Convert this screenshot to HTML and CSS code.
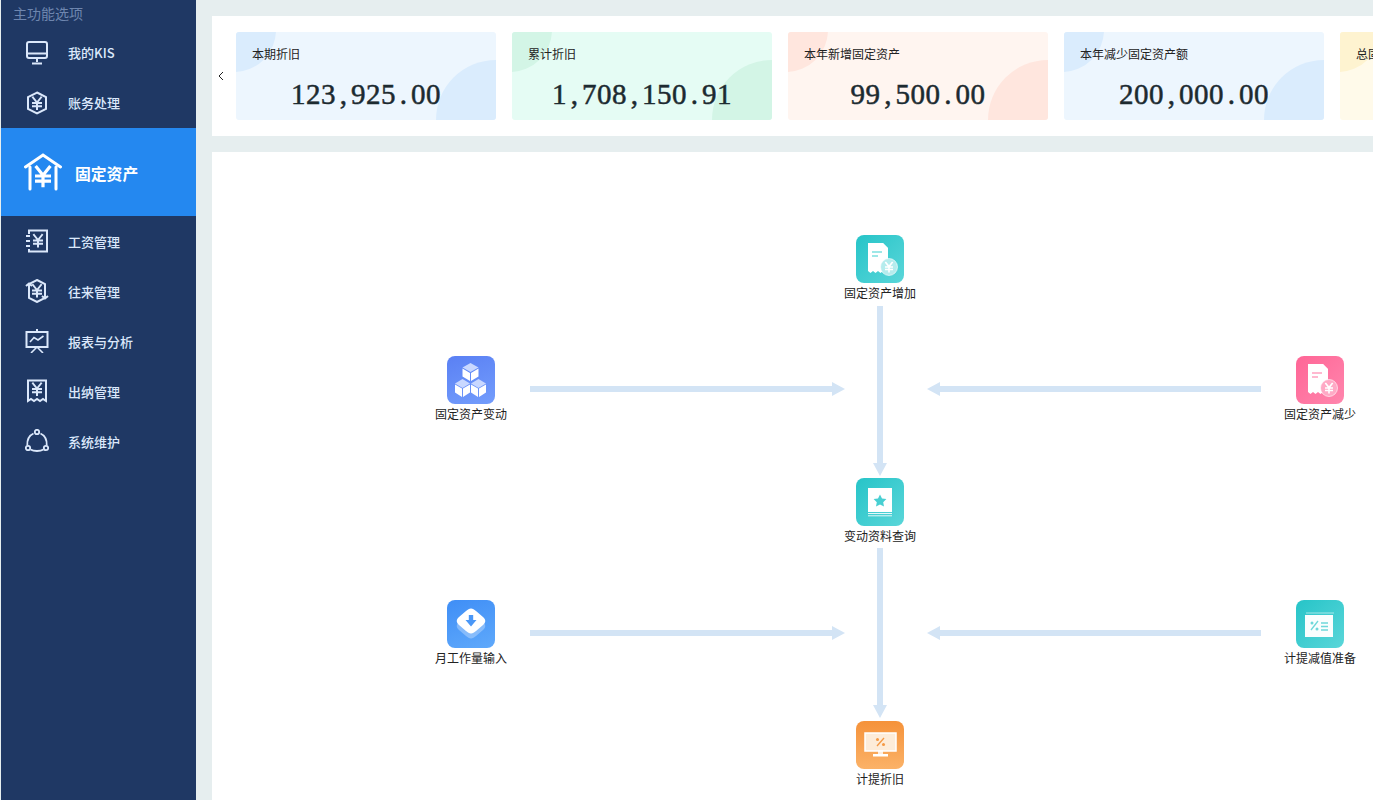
FILE: index.html
```html
<!DOCTYPE html>
<html lang="zh-CN">
<head>
<meta charset="utf-8">
<title>固定资产</title>
<link rel="stylesheet" href="styles.css">
</head>
<body>
<svg class="defs" width="0" height="0" aria-hidden="true">
  <defs>
    <g id="yen" fill="none" stroke="currentColor" stroke-width="2" stroke-linecap="square">
      <path d="M-4 -5.500L0 -0.500L4 -5.500M-4 0H4M-4 3.200H4M0 -0.500V6"/>
    </g>
    <g id="docu">
      <path d="M12 8H27L32 13V36L29.500 38L27 36L24.500 38L22 36L19.500 38L17 36L14.500 38L12 36Z" fill="#fff"/>
      <path d="M27 8V13H32Z" fill="#fff" opacity=".65"/>
      <path d="M16 17H26M16 21H22" fill="none" stroke="var(--accent)" stroke-width="1.600"/>
      <circle cx="33" cy="32" r="8.500" fill="var(--coin)" stroke="#fff" stroke-opacity=".6" stroke-width="1"/>
    </g>
  </defs>
</svg>
<div class="app">
  <aside class="sidebar">
    <h2 class="side-title">主功能选项</h2>
    <nav class="side-nav">
      <a class="side-item">
        <svg class="side-icon" viewBox="0 0 24 24" fill="none" stroke="currentColor" stroke-width="2"><rect x="2" y="1" width="20" height="16" rx="2"/><path d="M2 12.500H22M12 17V21M7 22.500H17"/></svg>
        <span>我的KIS</span>
      </a>
      <a class="side-item">
        <svg class="side-icon" viewBox="0 0 24 24" fill="none" stroke="currentColor" stroke-width="2"><path d="M12 1.500L21 6V18L12 22.500L3 18V6Z"/><use href="#yen" transform="translate(12 12)"/></svg>
        <span>账务处理</span>
      </a>
      <a class="side-item active">
        <svg class="side-icon big" viewBox="0 0 38 38" fill="none" stroke="currentColor" stroke-width="3" stroke-linecap="round"><path d="M1.500 14L19 2L36.500 14"/><path d="M6 14V36M32 14V36"/><g transform="translate(19 23) scale(1.600)"><use href="#yen"/></g></svg>
        <span>固定资产</span>
      </a>
      <a class="side-item">
        <svg class="side-icon" viewBox="0 0 24 24" fill="none" stroke="currentColor" stroke-width="2"><path d="M4 5V1.500H22V22.500H4V20"/><path d="M1 7H5M1 12H5M1 17H5"/><use href="#yen" transform="translate(13 11.500)"/></svg>
        <span>工资管理</span>
      </a>
      <a class="side-item">
        <svg class="side-icon" viewBox="0 0 24 24" fill="none" stroke="currentColor" stroke-width="2"><path d="M12 1L20 5V19L12 23L4 19V5Z"/><path d="M1 7L4 4.500L7 7M17 17L20 19.500L23 17"/><use href="#yen" transform="translate(12 11.500)"/></svg>
        <span>往来管理</span>
      </a>
      <a class="side-item">
        <svg class="side-icon" viewBox="0 0 24 24" fill="none" stroke="currentColor" stroke-width="2"><path d="M12 0V3M1.500 3H22.500V18H1.500Z"/><path d="M5 13L9 8.500L13 11L18.500 7" stroke-width="1.600"/><path d="M12 18L6 24M12 18L18 24" stroke-width="1.600"/></svg>
        <span>报表与分析</span>
      </a>
      <a class="side-item">
        <svg class="side-icon" viewBox="0 0 24 24" fill="none" stroke="currentColor" stroke-width="2"><path d="M3 22V1.500H21V22L18 20L15 22L12 20L9 22L6 20Z"/><use href="#yen" transform="translate(12 10)"/></svg>
        <span>出纳管理</span>
      </a>
      <a class="side-item">
        <svg class="side-icon" viewBox="0 0 24 24" fill="none" stroke="currentColor" stroke-width="1.800"><circle cx="12" cy="3" r="2.200"/><circle cx="3" cy="19" r="2.200"/><circle cx="21" cy="19" r="2.200"/><path d="M8.500 4.500C4 6.500 2 11 2.300 16.500M15.500 4.500C20 6.500 22 11 21.700 16.500M5.500 20.500C9 22.500 15 22.500 18.500 20.500"/></svg>
        <span>系统维护</span>
      </a>
    </nav>
  </aside>

  <main class="main">
    <section class="summary">
      <button class="prev" type="button" aria-label="上一页">
        <svg viewBox="0 0 6 10" width="6" height="10" fill="none" stroke="#222" stroke-width="1"><path d="M5 1L1 5L5 9"/></svg>
      </button>
      <div class="track">
        <article class="card blue"><h3 class="card-title">本期折旧</h3><p class="card-value">123<span class="sep">,</span>925<span class="sep">.</span>00</p></article>
        <article class="card green"><h3 class="card-title">累计折旧</h3><p class="card-value">1<span class="sep">,</span>708<span class="sep">,</span>150<span class="sep">.</span>91</p></article>
        <article class="card orange"><h3 class="card-title">本年新增固定资产</h3><p class="card-value">99<span class="sep">,</span>500<span class="sep">.</span>00</p></article>
        <article class="card blue"><h3 class="card-title">本年减少固定资产额</h3><p class="card-value">200<span class="sep">,</span>000<span class="sep">.</span>00</p></article>
        <article class="card yellow"><h3 class="card-title">总固定资产</h3></article>
      </div>
    </section>

    <section class="flow">
      <div class="arrow down a-top"></div>
      <div class="arrow down a-bottom"></div>
      <div class="arrow right a-l1"></div>
      <div class="arrow right a-l2"></div>
      <div class="arrow left a-r1"></div>
      <div class="arrow left a-r2"></div>

      <div class="node n-add">
        <svg class="tile teal" viewBox="0 0 48 48"><use href="#docu"/><use href="#yen" class="coin-yen" transform="translate(33 32) scale(.8)"/></svg>
        <span class="node-label">固定资产增加</span>
      </div>
      <div class="node n-change">
        <svg class="tile indigo" viewBox="0 0 48 48">
          <path d="M23.500 7L31.500 11.500L23.500 16L15.500 11.500Z" fill="#c9d8ff"/>
          <path d="M15.500 12.500L23 17V25L15.500 20.500ZM31.500 12.500L24 17V25L31.500 20.500Z" fill="#fff"/>
          <path d="M15.500 23L23 27.500L15.500 32L8 27.500Z" fill="#c9d8ff"/>
          <path d="M8 28.500L15 32.500V41L8 36.500ZM23 28.500L16 32.500V41L23 36.500Z" fill="#fff"/>
          <path d="M31.500 23L39 27.500L31.500 32L24 27.500Z" fill="#c9d8ff"/>
          <path d="M24 28.500L31 32.500V41L24 36.500ZM39 28.500L32 32.500V41L39 36.500Z" fill="#fff"/>
        </svg>
        <span class="node-label">固定资产变动</span>
      </div>
      <div class="node n-reduce">
        <svg class="tile pink" viewBox="0 0 48 48"><use href="#docu"/><use href="#yen" class="coin-yen" transform="translate(33 32) scale(.8)"/></svg>
        <span class="node-label">固定资产减少</span>
      </div>
      <div class="node n-query">
        <svg class="tile teal" viewBox="0 0 48 48">
          <rect x="12" y="10" width="24" height="24" fill="#fff"/>
          <path d="M12 35.500H36M12 37.800H36" stroke="#fff" stroke-width="1" opacity=".85"/>
          <path d="M24 16.500L26 20.500L30.400 21.100L27.200 24.200L28 28.600L24 26.500L20 28.600L20.800 24.200L17.600 21.100L22 20.500Z" fill="#48cfd2"/>
        </svg>
        <span class="node-label">变动资料查询</span>
      </div>
      <div class="node n-month">
        <svg class="tile sky" viewBox="0 0 48 48">
          <path d="M24 13.500C26 13.500 27 14.500 29 16L36 22C39 24.500 39 27.500 36 30L29 36C27 37.500 26 38.500 24 38.500C22 38.500 21 37.500 19 36L12 30C9 27.500 9 24.500 12 22L19 16C21 14.500 22 13.500 24 13.500Z" fill="#fff" opacity=".3"/>
          <path d="M24 8.500C26 8.500 27 9.500 29 11L36 17C39 19.500 39 22.500 36 25L29 31C27 32.500 26 33.500 24 33.500C22 33.500 21 32.500 19 31L12 25C9 22.500 9 19.500 12 17L19 11C21 9.500 22 8.500 24 8.500Z" fill="#fff"/>
          <path d="M21.800 15H26.200V20H29.500L24 26.500L18.500 20H21.800Z" fill="#4a97f7"/>
        </svg>
        <span class="node-label">月工作量输入</span>
      </div>
      <div class="node n-provision">
        <svg class="tile teal" viewBox="0 0 48 48">
          <path d="M10 13H38" stroke="#fff" stroke-opacity=".55" stroke-width="1"/>
          <rect x="9" y="15" width="28" height="22" fill="#fff" opacity=".97"/>
          <path d="M15 30L22 21M25 23H32M25 26.500H32M25 30H32" stroke="#6fd8da" stroke-width="1.300" fill="none"/>
          <circle cx="16" cy="23" r="1.500" fill="#6fd8da"/><circle cx="21" cy="29" r="1.500" fill="#6fd8da"/>
        </svg>
        <span class="node-label">计提减值准备</span>
      </div>
      <div class="node n-depr">
        <svg class="tile amber" viewBox="0 0 48 48">
          <rect x="9" y="12" width="31" height="18" fill="#fdecd9" stroke="#fff" stroke-width="1.500"/>
          <path d="M22 29.500H27V33H22Z" fill="#fff" opacity=".8"/>
          <rect x="17" y="33" width="15" height="2.500" fill="#fff"/>
          <path d="M21 25L28 17" stroke="#f59a45" stroke-width="1.400"/>
          <circle cx="21.500" cy="18.500" r="1.500" fill="#f59a45"/><circle cx="27.500" cy="23.500" r="1.500" fill="#f59a45"/>
        </svg>
        <span class="node-label">计提折旧</span>
      </div>
    </section>
  </main>
</div>
</body>
</html>
```
FILE: styles.css
```css
* { box-sizing: border-box; }
html, body { margin: 0; height: 100%; overflow: hidden; }
body {
  background: #e6eeef;
  font-family: "Noto Sans CJK SC", "Noto Sans", sans-serif;
  font-size: 12px;
  color: #222;
}
.defs { position: absolute; }
.app { display: flex; height: 100vh; }

.sidebar {
  flex: none;
  width: 195px;
  margin-left: 1px;
  background: #1f3864;
  color: #dbe8fb;
}
.side-title {
  margin: 0;
  height: 28px;
  padding-left: 12px;
  font-size: 14px;
  font-weight: 400;
  line-height: 26px;
  color: #6e86af;
}
.side-nav { display: flex; flex-direction: column; }
.side-item {
  display: flex;
  align-items: center;
  gap: 19px;
  height: 50px;
  padding-left: 24px;
  font-size: 13px;
  font-weight: 500;
}
.side-item span { margin-bottom: 2px; }
.side-item.active ~ .side-item span { margin-bottom: 0; }
.side-icon { flex: none; width: 24px; height: 24px; }
.side-item.active {
  height: 88px;
  gap: 13px;
  padding-left: 23px;
  background: #2488f0;
  color: #fff;
  font-size: 15.800px;
  font-weight: 700;
}
.side-item.active span { margin: 2px 0 0; }
.side-icon.big { width: 38px; height: 38px; }

.main {
  flex: 1;
  min-width: 0;
  display: flex;
  flex-direction: column;
  gap: 16px;
  padding: 16px 0 0 16px;
}
.summary {
  flex: none;
  display: flex;
  align-items: center;
  height: 120px;
  background: #fff;
  overflow: hidden;
}
.prev {
  flex: none;
  width: 24px;
  height: 24px;
  padding: 0 6px 0 0;
  border: 0;
  background: none;
  display: flex;
  align-items: center;
  justify-content: center;
}
.track { display: flex; gap: 16px; }
.card {
  position: relative;
  flex: none;
  width: 260px;
  height: 88px;
  padding: 13px 16px 0;
  border-radius: 3px;
  overflow: hidden;
  background: var(--card);
}
.card::before, .card::after {
  content: "";
  position: absolute;
  border-radius: 50%;
  background: var(--blob);
}
.card::before { left: -44px; top: -44px; width: 84px; height: 84px; }
.card::after { right: -60px; bottom: -60px; width: 120px; height: 120px; }
.card.blue { --card: #edf6fe; --blob: #daecfd; }
.card.green { --card: #e5fcf4; --blob: #d3f5e6; }
.card.orange { --card: #fff5f0; --blob: #ffe6de; }
.card.yellow { --card: #fffaea; --blob: #fef3d0; }
.card-title {
  position: relative;
  z-index: 1;
  margin: 0;
  font-size: 12px;
  font-weight: 400;
  line-height: 18px;
  color: #222;
}
.card-value {
  position: relative;
  z-index: 1;
  margin: 14px 0 0;
  font-family: "Liberation Serif", serif;
  font-size: 29px;
  line-height: 34px;
  letter-spacing: .5px;
  text-align: center;
  color: #1c2a30;
  -webkit-text-stroke: .5px #1c2a30;
}
.sep { display: inline-block; width: 15px; }

.flow {
  position: relative;
  flex: 1;
  background: #fff;
  overflow: hidden;
}
.node {
  position: absolute;
  width: 96px;
  display: flex;
  flex-direction: column;
  align-items: center;
}
.tile {
  display: block;
  width: 48px;
  height: 48px;
  border-radius: 8px;
}
.node-label {
  font-size: 12px;
  line-height: 20px;
  color: #222;
  white-space: nowrap;
}
.teal { background: linear-gradient(135deg, #26c4c8, #5ad6d9); --accent: #7fdfe0; --coin: #b5eced; }
.indigo { background: linear-gradient(160deg, #5a80f4, #739dfc); }
.pink { background: linear-gradient(135deg, #ff6596, #ff86ad); --accent: #ffa3c1; --coin: #ffa9c5; }
.sky { background: linear-gradient(160deg, #3f8ef6, #5fa9fb); }
.amber { background: linear-gradient(180deg, #f5923a, #fbb268); }
.coin-yen { color: #fff; }

.n-add { left: 620px; top: 83px; }
.n-change { left: 211px; top: 204px; }
.n-reduce { left: 1060px; top: 204px; }
.n-query { left: 620px; top: 326px; }
.n-month { left: 211px; top: 448px; }
.n-provision { left: 1060px; top: 448px; }
.n-depr { left: 620px; top: 569px; }

.arrow { position: absolute; background: #d3e4f5; }
.arrow::after { content: ""; position: absolute; width: 0; height: 0; border-style: solid; border-color: transparent; }
.arrow.right, .arrow.left { height: 6px; }
.arrow.down { width: 6px; }
.arrow.right::after {
  right: -13px; top: -4px;
  border-width: 7px 0 7px 13px;
  border-left-color: #d3e4f5;
}
.arrow.left::after {
  left: -13px; top: -4px;
  border-width: 7px 13px 7px 0;
  border-right-color: #d3e4f5;
}
.arrow.down::after {
  left: -4.500px; bottom: -13px;
  border-width: 13px 7.500px 0;
  border-top-color: #d3e4f5;
}
.a-top { left: 665px; top: 154px; height: 157px; }
.a-bottom { left: 665px; top: 396px; height: 157px; }
.a-l1 { left: 318px; top: 234px; width: 302px; }
.a-l2 { left: 318px; top: 478px; width: 302px; }
.a-r1 { left: 728px; top: 234px; width: 321px; }
.a-r2 { left: 728px; top: 478px; width: 321px; }
```
